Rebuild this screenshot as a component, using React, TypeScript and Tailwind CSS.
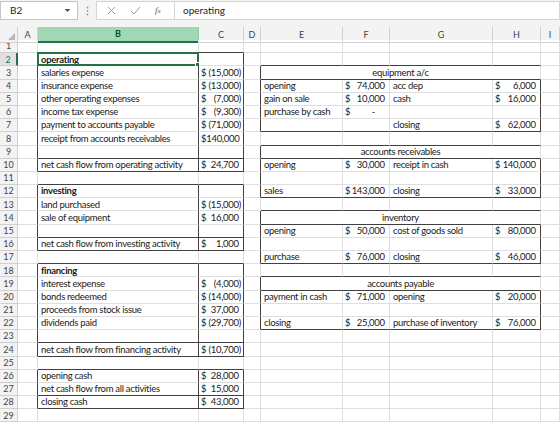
import React from "react";

type Cell = { t?: string; b?: boolean; acc?: string; dash?: boolean; title?: boolean };

const LETTERS = ["A", "B", "C", "D", "E", "F", "G", "H", "I"];
const GRID = "grid grid-cols-[18px_20px_161px_45px_17px_82px_47px_103px_48px_19px]";

const data: Record<string, Cell> = {
  B2: { t: "operating", b: true },
  B3: { t: "salaries expense" },
  B4: { t: "insurance expense" },
  B5: { t: "other operating expenses" },
  B6: { t: "income tax expense" },
  B7: { t: "payment to accounts payable" },
  B8: { t: "receipt from accounts receivables" },
  B10: { t: "net cash flow from operating activity" },
  B12: { t: "investing", b: true },
  B13: { t: "land purchased" },
  B14: { t: "sale of equipment" },
  B16: { t: "net cash flow from investing activity" },
  B18: { t: "financing", b: true },
  B19: { t: "interest expense" },
  B20: { t: "bonds redeemed" },
  B21: { t: "proceeds from stock issue" },
  B22: { t: "dividends paid" },
  B24: { t: "net cash flow from financing activity" },
  B26: { t: "opening cash" },
  B27: { t: "net cash flow from all activities" },
  B28: { t: "closing cash" },
  C3: { acc: "(15,000)" },
  C4: { acc: "(13,000)" },
  C5: { acc: "(7,000)" },
  C6: { acc: "(9,300)" },
  C7: { acc: "(71,000)" },
  C8: { acc: "140,000" },
  C10: { acc: "24,700" },
  C13: { acc: "(15,000)" },
  C14: { acc: "16,000" },
  C16: { acc: "1,000" },
  C19: { acc: "(4,000)" },
  C20: { acc: "(14,000)" },
  C21: { acc: "37,000" },
  C22: { acc: "(29,700)" },
  C24: { acc: "(10,700)" },
  C26: { acc: "28,000" },
  C27: { acc: "15,000" },
  C28: { acc: "43,000" },
  E3: { t: "equipment a/c", title: true },
  E4: { t: "opening" },
  F4: { acc: "74,000" },
  G4: { t: "acc dep" },
  H4: { acc: "6,000" },
  E5: { t: "gain on sale" },
  F5: { acc: "10,000" },
  G5: { t: "cash" },
  H5: { acc: "16,000" },
  E6: { t: "purchase by cash" },
  F6: { dash: true },
  G7: { t: "closing" },
  H7: { acc: "62,000" },
  E9: { t: "accounts receivables", title: true },
  E10: { t: "opening" },
  F10: { acc: "30,000" },
  G10: { t: "receipt in cash" },
  H10: { acc: "140,000" },
  E12: { t: "sales" },
  F12: { acc: "143,000" },
  G12: { t: "closing" },
  H12: { acc: "33,000" },
  E14: { t: "inventory", title: true },
  E15: { t: "opening" },
  F15: { acc: "50,000" },
  G15: { t: "cost of goods sold" },
  H15: { acc: "80,000" },
  E17: { t: "purchase" },
  F17: { acc: "76,000" },
  G17: { t: "closing" },
  H17: { acc: "46,000" },
  E19: { t: "accounts payable", title: true },
  E20: { t: "payment in cash" },
  F20: { acc: "71,000" },
  G20: { t: "opening" },
  H20: { acc: "20,000" },
  E22: { t: "closing" },
  F22: { acc: "25,000" },
  G22: { t: "purchase of inventory" },
  H22: { acc: "76,000" },
};

const L = [
  [2, 10, 9],
  [12, 16, 15],
  [18, 24, 23],
  [26, 28, 27],
];
const R = [
  [3, 7],
  [9, 12],
  [14, 17],
  [19, 22],
];

function darkRight(r: number, c: string) {
  if ("ABC".includes(c) && L.some(([s, e]) => r >= s && r <= e)) return true;
  if ((c === "D" || c === "H") && R.some(([s, e]) => r >= s && r <= e)) return true;
  return false;
}
function darkBottom(r: number, c: string) {
  if ("BC".includes(c) && L.some(([s, e, m]) => r === s - 1 || r === m || r === e)) return true;
  if ("EFGH".includes(c) && R.some(([s, e]) => r === s - 1 || r === s || r === e)) return true;
  return false;
}

function CellView({ r, c }: { r: number; c: string }) {
  const cell = data[c + r];
  const dr = darkRight(r, c);
  const db = darkBottom(r, c);
  const isTitle = cell?.title;
  const cls = [
    "relative flex items-center overflow-visible whitespace-nowrap border-r border-b leading-none",
    dr ? "border-r-[#404040]" : "border-r-[#dedede]",
    db ? "border-b-[#404040]" : "border-b-[#dedede]",
    isTitle ? "col-span-4 justify-center" : "",
  ].join(" ");
  let inner: React.ReactNode = null;
  if (cell?.t) {
    inner = <span className={(cell.b ? "font-bold " : "") + (isTitle ? "" : "pl-[3px]")}>{cell.t}</span>;
  } else if (cell?.acc) {
    const neg = cell.acc.startsWith("(");
    inner = (
      <div className="flex w-full justify-between pl-[2px] pr-[2px]">
        <span>$</span>
        <span>
          {cell.acc}
          {!neg && <span className="invisible">)</span>}
        </span>
      </div>
    );
  } else if (cell?.dash) {
    inner = (
      <div className="flex w-full justify-between pl-[2px] pr-[14px]">
        <span>$</span>
        <span>-</span>
      </div>
    );
  }
  return (
    <div className={cls}>
      {inner}
      {c === "B" && r === 2 && (
        <div className="pointer-events-none absolute -left-px -top-px bottom-[-1px] right-[-1px] border-2 border-[#217346]">
          <div className="absolute -bottom-[3px] -right-[3px] h-[5px] w-[5px] border border-white bg-[#217346]" />
        </div>
      )}
    </div>
  );
}

export default function App() {
  const rows = Array.from({ length: 29 }, (_, i) => i + 1);
  return (
    <div
      className="h-[423px] w-[560px] overflow-hidden bg-white text-[9.5px] text-[#1a1a1a]"
      style={{ fontFamily: "Lato, 'Noto Sans', sans-serif" }}
    >
      {/* formula bar */}
      <div className="flex h-[27px] items-start bg-[#f3f3f3] pt-[1px]">
        <div className="flex h-[19px] w-[78px] items-center justify-between border border-[#c6c6c6] bg-white pl-[9px] pr-[6px] text-[10px] text-[#222]">
          <span>B2</span>
          <svg width="7" height="5" viewBox="0 0 7 5"><path d="M0.5 1 L3.5 4 L6.5 1 Z" fill="#555" /></svg>
        </div>
        <div className="flex h-[19px] w-[18px] items-center justify-center">
          <svg width="3" height="10" viewBox="0 0 3 10">
            <circle cx="1.5" cy="1.5" r="0.9" fill="#999" />
            <circle cx="1.5" cy="5" r="0.9" fill="#999" />
            <circle cx="1.5" cy="8.5" r="0.9" fill="#999" />
          </svg>
        </div>
        <div className="flex h-[19px] w-[78px] items-center border border-r-0 border-[#d4d4d4] bg-white">
          <svg className="ml-[10px]" width="9" height="9" viewBox="0 0 9 9">
            <path d="M1 1 L8 8 M8 1 L1 8" stroke="#9a9a9a" strokeWidth="1" />
          </svg>
          <svg className="ml-[14px]" width="11" height="9" viewBox="0 0 11 9">
            <path d="M1 5 L4 8 L10 1" stroke="#9a9a9a" strokeWidth="1" fill="none" />
          </svg>
          <span className="ml-[14px] text-[9px] italic text-[#555]" style={{ fontFamily: "'Liberation Serif', serif" }}>
            f<span className="text-[7px]">x</span>
          </span>
        </div>
        <div className="flex h-[19px] flex-1 items-center border border-[#d4d4d4] bg-white pl-[8px] text-[10px] text-[#222]">
          operating
        </div>
      </div>
      {/* column headers */}
      <div className={GRID + " h-[13px] bg-[#f3f3f3] text-[9px] text-[#444]"}>
        <div className="relative border-r border-b border-[#d0d0d0]">
          <svg className="absolute bottom-[2px] right-[2px]" width="7" height="7" viewBox="0 0 7 7">
            <path d="M7 0 L7 7 L0 7 Z" fill="#b8b8b8" />
          </svg>
        </div>
        {LETTERS.map((l) =>
          l === "B" ? (
            <div key={l} className="flex items-center justify-center border-r border-r-[#8fc5a6] border-b-2 border-b-[#217346] bg-[#a0d8b3] font-bold text-[#0f4a28]">
              {l}
            </div>
          ) : (
            <div key={l} className="flex items-center justify-center border-r border-b border-[#d0d0d0]">
              {l}
            </div>
          )
        )}
      </div>
      {/* body */}
      <div className={GRID + " auto-rows-[13.2px] tracking-[-0.3px]"}>
        {rows.map((r) => (
          <React.Fragment key={r}>
            {r === 2 ? (
              <div className="flex items-center justify-center border-r-2 border-r-[#217346] border-b border-b-[#d0d0d0] bg-[#e1e1e1] text-[9px] tracking-normal text-[#217346]">
                {r}
              </div>
            ) : (
              <div className="flex items-center justify-center border-r border-b border-[#d0d0d0] bg-[#f3f3f3] text-[9px] tracking-normal text-[#444]">
                {r}
              </div>
            )}
            {LETTERS.map((c) => {
              const isTitleRow = R.some(([s]) => s === r);
              if (isTitleRow && (c === "F" || c === "G" || c === "H")) return null;
              return <CellView key={c} r={r} c={c} />;
            })}
          </React.Fragment>
        ))}
      </div>
    </div>
  );
}
